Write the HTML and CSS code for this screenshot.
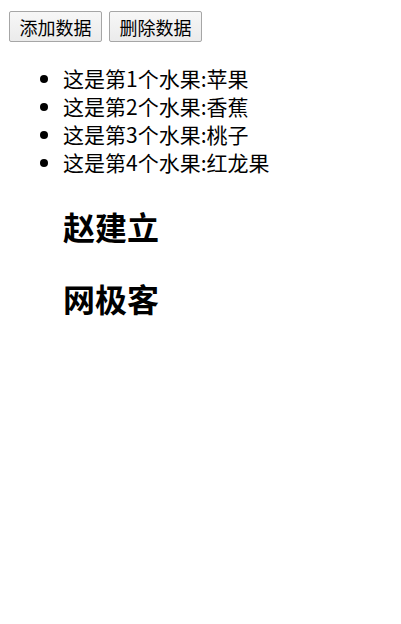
FILE: index.html
```html
<!DOCTYPE html>
<html lang="zh-CN">
<head>
<meta charset="utf-8">
<title>水果列表</title>
<link rel="stylesheet" href="styles.css">
</head>
<body>
<div class="app">
  <div class="toolbar">
    <button class="btn" type="button">添加数据</button>
    <button class="btn" type="button">删除数据</button>
  </div>
  <ul class="fruits">
    <li>这是第1个水果:苹果</li>
    <li>这是第2个水果:香蕉</li>
    <li>这是第3个水果:桃子</li>
    <li>这是第4个水果:红龙果</li>
  </ul>
  <h2 class="name">赵建立</h2>
  <h2 class="name">网极客</h2>
</div>
</body>
</html>
```
FILE: styles.css
```css
html, body {
  margin: 0;
  padding: 0;
  background: #ffffff;
}
.app {
  font-family: "Noto Sans CJK SC", "Microsoft YaHei", sans-serif;
  color: #000;
  font-size: 21px;
}
.toolbar {
  display: flex;
  gap: 7px;
  padding: 11px 0 0 9px;
}
.btn {
  box-sizing: border-box;
  width: 93px;
  height: 31px;
  padding: 0;
  font-family: "Noto Sans CJK SC", "Microsoft YaHei", sans-serif;
  font-size: 18px;
  line-height: 1;
  color: #000;
  background: linear-gradient(#f7f7f7, #ebebeb);
  border: 1px solid #a6a6a6;
  border-radius: 2px;
}
.fruits {
  margin: 22px 0 0 0;
  padding-left: 63px;
  list-style: disc;
}
.fruits li {
  line-height: 28px;
}
.name {
  margin: 28px 0 28px 63px;
  font-size: 32px;
  line-height: 44px;
  font-weight: bold;
}
```
